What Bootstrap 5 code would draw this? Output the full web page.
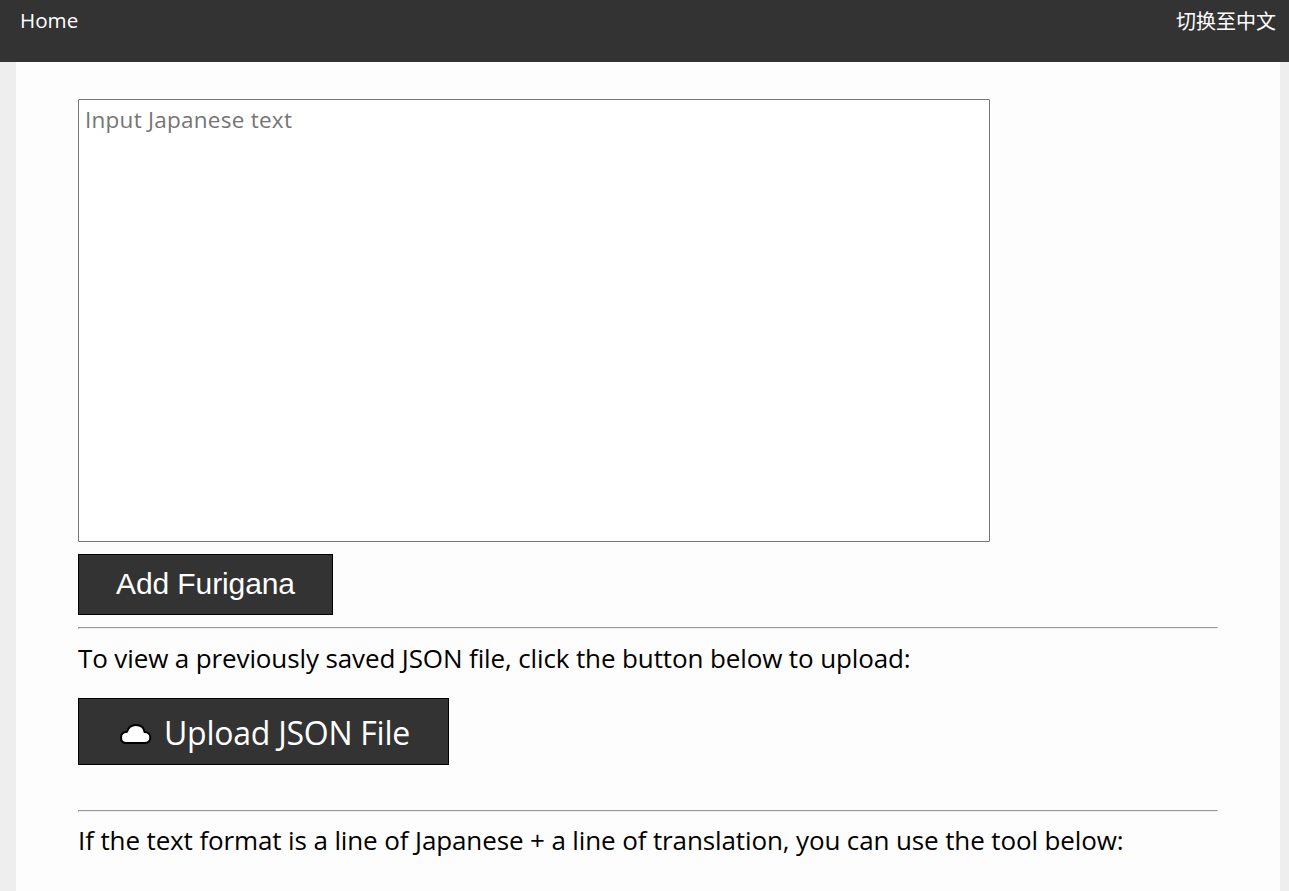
<!DOCTYPE html>
<html lang="en">
<head>
<meta charset="utf-8">
<meta name="viewport" content="width=device-width, initial-scale=1">
<title>Add Furigana</title>
<link href="https://cdn.jsdelivr.net/npm/bootstrap@5.3.0/dist/css/bootstrap.min.css" rel="stylesheet">
<style>
  body { background: #eee; color: #000; font-family: "Open Sans", "Noto Sans CJK SC", sans-serif; height: 100vh; overflow: hidden; }
  .topbar { background: #333; height: 62px; padding: 5px 13px 0 20px; }
  .topbar a { color: #fff; font-size: 20px; line-height: 30px; white-space: nowrap; }
  .topbar .home { font-size: 20.6px; }
  .topbar .lang { padding-top: 2px; }
  .page { background: #fdfdfd; margin: 0 9px 0 16px; padding: 37px 62px 0; height: 829px; }
  .source-text { width: 912px; height: 443px; border: 1px solid #767676; border-radius: 1px; background: #fff; padding: 4px 6px; font-size: 22.5px; letter-spacing: .25px; line-height: 32px; resize: none; }
  .source-text::placeholder { color: #757575; }
  .action { background: #333; color: #fff; border: 1px solid #000; border-radius: 0; padding: 0; white-space: nowrap; }
  .action:hover { background: #333; color: #fff; border-color: #000; }
  .furigana { width: 255px; height: 61px; margin-top: 12px; padding-bottom: 2px; font: 30px/57px "Liberation Sans", sans-serif; letter-spacing: -.1px; }
  .upload { width: 371px; height: 67px; margin-top: 22px; padding: 2px 0 0 41px; gap: 12px; font-size: 32px; letter-spacing: -.25px; line-height: 63px; }
  .upload svg { margin-top: 3px; }
  .rule { height: 2px; border: 1px solid; border-color: #9a9a9a #eee #eee #9a9a9a; opacity: 1; margin: 12px 0 0; }
  .upload + .rule { margin-top: 45px; }
  .note { font-size: 26px; letter-spacing: -.12px; line-height: 36px; margin: 11px 0 0; white-space: nowrap; }
  .note:last-child { margin-top: 10px; }
</style>
</head>
<body>
<nav class="topbar d-flex justify-content-between align-items-start">
  <a class="home text-decoration-none" href="#">Home</a>
  <a class="lang text-decoration-none" href="#" lang="zh">切换至中文</a>
</nav>
<main class="page">
  <textarea class="source-text d-block" placeholder="Input Japanese text"></textarea>
  <button class="btn action furigana d-block" type="button">Add Furigana</button>
  <hr class="rule">
  <p class="note">To view a previously saved JSON file, click the button below to upload:</p>
  <button class="btn action upload d-flex align-items-center" type="button">
    <svg width="32" height="22" viewBox="0 0 32 22" aria-hidden="true"><path d="M6.5 20C3 20 1 17.8 1 14.7C1 11.3 3.4 9 7 8.8C8.2 4.7 11.3 2 15.8 2C20.6 2 24 4.7 24.5 9C28 9 30.3 11.5 30.3 14.6C30.3 17.8 28 20 24.8 20Z" fill="#fff" stroke="#000" stroke-width="2" stroke-linejoin="round"/></svg>
    <span>Upload JSON File</span>
  </button>
  <hr class="rule">
  <p class="note">If the text format is a line of Japanese + a line of translation, you can use the tool below:</p>
</main>
<script src="https://cdn.jsdelivr.net/npm/bootstrap@5.3.0/dist/js/bootstrap.bundle.min.js"></script>
</body>
</html>
